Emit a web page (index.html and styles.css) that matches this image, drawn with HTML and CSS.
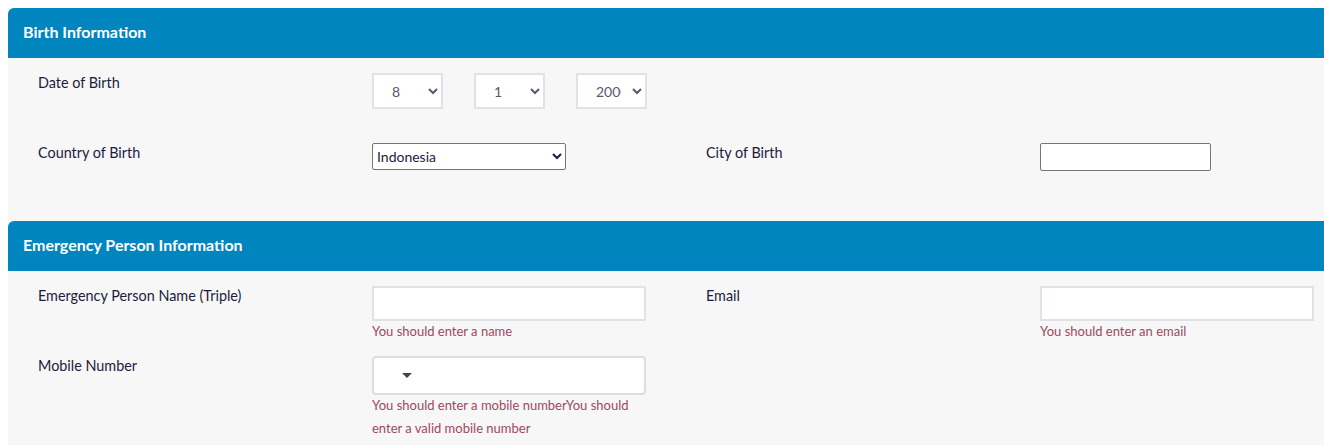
FILE: index.html
```html
<!DOCTYPE html>
<html lang="en">
<head>
  <meta charset="UTF-8" />
  <meta name="viewport" content="width=device-width, initial-scale=1.0"/>
  <title>Personal Information</title>
  <link rel="stylesheet" href="styles.css">
</head>
<body>
  <div class="panel">
    <h2 class="section-title">Birth Information</h2>
    <div class="section birth">
      <div class="row">
        <label class="field-label">Date of Birth</label>
        <div class="field date-field">
          <select class="date-select">
            <option>8</option>
          </select>
          <select class="date-select">
            <option>1</option>
          </select>
          <select class="date-select">
            <option>2000</option>
          </select>
        </div>
      </div>
      <div class="row">
        <label class="field-label">Country of Birth</label>
        <div class="field">
          <select class="country-select">
            <option>Indonesia</option>
          </select>
        </div>
        <label class="field-label">City of Birth</label>
        <div class="field">
          <input type="text" class="plain-input">
        </div>
      </div>
    </div>

    <h2 class="section-title">Emergency Person Information</h2>
    <div class="section emergency">
      <div class="row">
        <label class="field-label">Emergency Person Name (Triple)</label>
        <div class="field">
          <input type="text" class="text-input">
          <div class="error">You should enter a name</div>
        </div>
        <label class="field-label">Email</label>
        <div class="field">
          <input type="text" class="text-input">
          <div class="error">You should enter an email</div>
        </div>
      </div>
      <div class="row">
        <label class="field-label">Mobile Number</label>
        <div class="field">
          <div class="phone-input">
            <span class="flag-drop"><span class="caret"></span></span>
            <input type="tel">
          </div>
          <div class="error">You should enter a mobile numberYou should enter a valid mobile number</div>
        </div>
      </div>
    </div>
  </div>
</body>
</html>
```

FILE: styles.css
```css
html { overflow-x: hidden; }
body { margin: 8px 0 0 8px; background: #fff; font-family: Lato, "Liberation Sans", sans-serif; color: #1c1c3e; }
.panel { background: #f7f7f7; }
.section-title { margin: 0; height: 50px; padding: 0 0 3px 15px; box-sizing: border-box; display: flex; align-items: center; background: #0085bf; color: #fff; font-size: 16px; font-weight: 700; border-top-left-radius: 6px; }
.section { padding: 15px 0 0 30px; display: flex; flex-direction: column; }
.birth { gap: 34px; padding-bottom: 50px; }
.emergency { gap: 13px; padding-bottom: 12px; }
.row { display: grid; grid-template-columns: 334px 334px 334px 1fr; align-items: start; }
.field-label { font-size: 14.4px; line-height: 20px; }
.field { display: flex; flex-direction: column; align-items: flex-start; }
.date-field { flex-direction: row; gap: 31px; }
.date-select { width: 71px; height: 36px; padding: 0 8px 0 14px; border: 2px solid #e1e1e8; border-radius: 0; background: #fff; color: #555a6e; font-family: inherit; font-size: 14px; }
.country-select { width: 194px; height: 27px; border: 1px solid #767676; border-radius: 2px; background: #fff; color: #1c1c3e; font-family: inherit; font-size: 14px; padding-left: 0; }
.plain-input { width: 171px; height: 28px; box-sizing: border-box; border: 1px solid #767676; border-radius: 2px; background: #fff; }
.text-input { width: 274px; height: 35px; box-sizing: border-box; border: 2px solid #e1e1e8; border-radius: 0; background: #fff; }
.phone-input { width: 274px; height: 39px; box-sizing: border-box; display: flex; align-items: center; border: 2px solid #dcdce2; border-radius: 4px; background: #fff; }
.flag-drop { width: 52px; height: 100%; display: flex; align-items: center; justify-content: flex-end; padding-right: 14px; box-sizing: border-box; }
.caret { width: 0; height: 0; border-left: 5px solid transparent; border-right: 5px solid transparent; border-top: 5px solid #444; }
.phone-input input { flex: 1; min-width: 0; height: 100%; border: 0; background: transparent; outline: none; }
.error { width: 274px; margin-top: -1px; font-size: 13px; line-height: 23px; color: #a0475f; }
```
